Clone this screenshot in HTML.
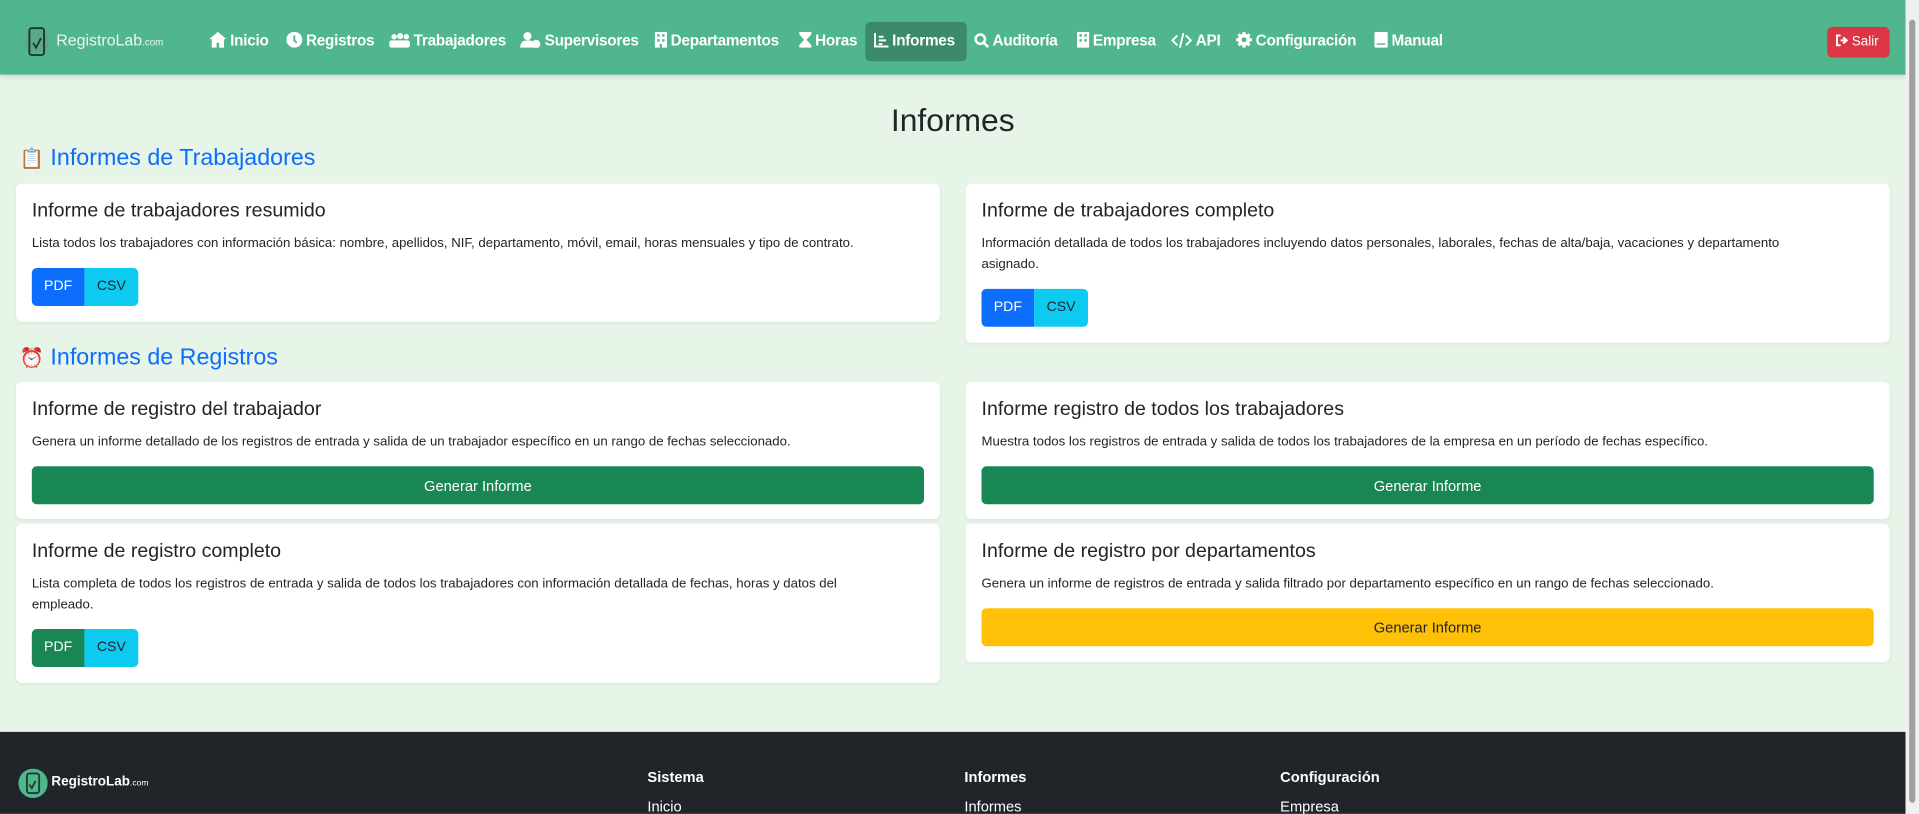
<!DOCTYPE html>
<html><head><meta charset="utf-8">
<style>
*{margin:0;padding:0;box-sizing:border-box}
html,body{width:1919px;height:814px;overflow:hidden;background:#e7f5e9}
#w{width:1568px;height:665px;transform:scale(1.22385);transform-origin:0 0;position:relative;font-family:"Liberation Sans",sans-serif;color:#212529}
.nav{position:absolute;left:0;top:0;width:1557px;height:61px;background:#4fb68e;box-shadow:0 2px 4px rgba(0,0,0,.12)}
.ni{position:absolute;top:26px;color:#fff;font-weight:bold;font-size:12.5px;white-space:nowrap;letter-spacing:-.2px}
.ni svg{vertical-align:-2px;margin-right:3px}
.act{position:absolute;left:707px;top:18px;width:83px;height:32px;background:#3b8a6a;border-radius:4px}
.salir{position:absolute;left:1493px;top:22px;width:51px;height:25px;background:#dc3545;border-radius:4px;color:#fff;font-size:11px;padding:6px 0 0 7px}
h1{position:absolute;left:0;width:1557px;top:83px;text-align:center;font-size:26px;font-weight:500}
.sec{position:absolute;left:16px;color:#0d6efd;font-size:19px}
.card{position:absolute;background:#fff;border-radius:5px;box-shadow:0 1px 3px rgba(0,0,0,.06)}
.card h3{position:absolute;left:13px;top:14px;font-size:16px;font-weight:500;white-space:nowrap}
.card p{position:absolute;left:13px;top:41px;right:13px;font-size:10.8px;line-height:17px}
.bg{position:absolute;left:13px;height:31px;display:flex;font-size:11.5px}
.bg span{display:block;padding:9px 0 0;text-align:center}
.gen{position:absolute;left:13px;right:13px;height:31px;border-radius:4px;color:#fff;font-size:12px;text-align:center;padding-top:9px;background:#198754}
.foot{position:absolute;left:0;top:598px;width:1557px;height:67px;background:#212529;color:#fff}
.fh{position:absolute;top:30px;font-weight:bold;font-size:12px}
.fl{position:absolute;top:54px;font-size:12px}
.sb{position:absolute;left:1557px;top:0;width:11px;height:665px;background:#f0f0f0}
.sb div{position:absolute;left:3px;top:16px;width:5px;height:640px;background:#a0a0a0;border-radius:3px}
</style></head><body><div id="w">
<div class="nav">
 <svg style="position:absolute;left:20px;top:21px" width="20" height="26" viewBox="0 0 20 26"><circle cx="10" cy="13" r="10" fill="#5aa98a"/><rect x="4" y="2" width="12" height="22" rx="2" fill="none" stroke="#1f3b30" stroke-width="1.6"/><path d="M7 14l2.5 4 4-8" stroke="#1f3b30" stroke-width="1.5" fill="none"/></svg>
 <div style="position:absolute;left:46px;top:25px;color:#f0f5f2;font-size:13px">RegistroLab<span style="font-size:8px">.com</span></div>
 <div class="act"></div>
 <div class="ni" style="left:171px"><svg width="14" height="13" viewBox="0 0 14 13"><path d="M7 0L0 6h2v7h4V9h2v4h4V6h2z" fill="#fff"/></svg>Inicio</div>
 <div class="ni" style="left:234px"><svg width="13" height="13"><circle cx="6.5" cy="6.5" r="6.5" fill="#fff"/><path d="M6.5 3v4l2 2" stroke="#4fb68e" stroke-width="1.5" fill="none"/></svg>Registros</div>
 <div class="ni" style="left:318px"><svg width="17" height="12"><circle cx="4" cy="3" r="2.2" fill="#fff"/><circle cx="9" cy="2.5" r="2.5" fill="#fff"/><circle cx="14" cy="3" r="2.2" fill="#fff"/><rect x="0" y="6" width="17" height="6" rx="2" fill="#fff"/></svg>Trabajadores</div>
 <div class="ni" style="left:425px"><svg width="17" height="13"><circle cx="6" cy="3.5" r="3.3" fill="#fff"/><path d="M0 13c0-4 2-6 6-6s5 1 6 3v3z" fill="#fff"/><circle cx="13" cy="10" r="3.5" fill="#fff"/></svg>Supervisores</div>
 <div class="ni" style="left:535px"><svg width="10" height="13"><rect width="10" height="13" fill="#fff"/><rect x="2" y="2" width="2" height="2" fill="#4fb68e"/><rect x="6" y="2" width="2" height="2" fill="#4fb68e"/><rect x="2" y="6" width="2" height="2" fill="#4fb68e"/><rect x="6" y="6" width="2" height="2" fill="#4fb68e"/><rect x="4" y="10" width="2" height="3" fill="#4fb68e"/></svg>Departamentos</div>
 <div class="ni" style="left:653px"><svg width="10" height="13"><path d="M0 0h10v2L6 6.5 10 11v2H0v-2l4-4.5L0 2z" fill="#fff"/></svg>Horas</div>
 <div class="ni" style="left:714px"><svg width="12" height="12"><path d="M1 0v11h11" stroke="#fff" stroke-width="1.6" fill="none"/><path d="M4 3h4M4 6h6M4 9h3" stroke="#fff" stroke-width="1.6"/></svg>Informes</div>
 <div class="ni" style="left:796px"><svg width="12" height="12"><circle cx="5" cy="5" r="3.8" stroke="#fff" stroke-width="2" fill="none"/><path d="M8 8l3.5 3.5" stroke="#fff" stroke-width="2"/></svg>Auditoría</div>
 <div class="ni" style="left:880px"><svg width="10" height="13"><rect width="10" height="13" fill="#fff"/><rect x="2" y="2" width="2" height="2" fill="#4fb68e"/><rect x="6" y="2" width="2" height="2" fill="#4fb68e"/><rect x="2" y="6" width="2" height="2" fill="#4fb68e"/><rect x="6" y="6" width="2" height="2" fill="#4fb68e"/></svg>Empresa</div>
 <div class="ni" style="left:957px"><svg width="17" height="12"><path d="M5 2L1 6l4 4M12 2l4 4-4 4M10 0L7 12" stroke="#fff" stroke-width="1.6" fill="none"/></svg>API</div>
 <div class="ni" style="left:1010px"><svg width="13" height="13"><circle cx="6.5" cy="6.5" r="5" fill="#fff"/><path d="M6.5 0v13M0 6.5h13M2 2l9 9M11 2l-9 9" stroke="#fff" stroke-width="2.5"/><circle cx="6.5" cy="6.5" r="2" fill="#4fb68e"/></svg>Configuración</div>
 <div class="ni" style="left:1123px"><svg width="11" height="13"><rect width="11" height="13" rx="1.5" fill="#fff"/><path d="M2 10h7" stroke="#4fb68e" stroke-width="1.2"/></svg>Manual</div>
 <div class="salir"><svg width="10" height="10" style="vertical-align:-1px"><path d="M4 1H1v8h3" stroke="#fff" stroke-width="1.6" fill="none"/><path d="M4 5h4M6 2.5L9 5 6 7.5" stroke="#fff" stroke-width="1.6" fill="none"/></svg> Salir</div>
</div>
<h1>Informes</h1>
<div class="sec" style="top:119px"><span style="font-size:16px">📋</span> Informes de Trabajadores</div>
<div class="card" style="left:13px;top:150px;width:755px;height:113px"><h3>Informe de trabajadores resumido</h3><p>Lista todos los trabajadores con información básica: nombre, apellidos, NIF, departamento, móvil, email, horas mensuales y tipo de contrato.</p>
 <div class="bg" style="top:69px"><span style="width:43px;background:#0d6efd;color:#fff;border-radius:4px 0 0 4px">PDF</span><span style="width:44px;background:#0dcaf0;border-radius:0 4px 4px 0">CSV</span></div></div>
<div class="card" style="left:789px;top:150px;width:755px;height:130px"><h3>Informe de trabajadores completo</h3><p>Información detallada de todos los trabajadores incluyendo datos personales, laborales, fechas de alta/baja, vacaciones y departamento<br>asignado.</p>
 <div class="bg" style="top:86px"><span style="width:43px;background:#0d6efd;color:#fff;border-radius:4px 0 0 4px">PDF</span><span style="width:44px;background:#0dcaf0;border-radius:0 4px 4px 0">CSV</span></div></div>
<div class="sec" style="top:282px"><span style="font-size:16px">⏰</span> Informes de Registros</div>
<div class="card" style="left:13px;top:312px;width:755px;height:112px"><h3>Informe de registro del trabajador</h3><p>Genera un informe detallado de los registros de entrada y salida de un trabajador específico en un rango de fechas seleccionado.</p><div class="gen" style="top:69px">Generar Informe</div></div>
<div class="card" style="left:789px;top:312px;width:755px;height:112px"><h3>Informe registro de todos los trabajadores</h3><p>Muestra todos los registros de entrada y salida de todos los trabajadores de la empresa en un período de fechas específico.</p><div class="gen" style="top:69px">Generar Informe</div></div>
<div class="card" style="left:13px;top:428px;width:755px;height:130px"><h3>Informe de registro completo</h3><p>Lista completa de todos los registros de entrada y salida de todos los trabajadores con información detallada de fechas, horas y datos del<br>empleado.</p>
 <div class="bg" style="top:86px"><span style="width:43px;background:#198754;color:#fff;border-radius:4px 0 0 4px">PDF</span><span style="width:44px;background:#0dcaf0;border-radius:0 4px 4px 0">CSV</span></div></div>
<div class="card" style="left:789px;top:428px;width:755px;height:113px"><h3>Informe de registro por departamentos</h3><p>Genera un informe de registros de entrada y salida filtrado por departamento específico en un rango de fechas seleccionado.</p><div class="gen" style="top:69px;background:#ffc107;color:#212529">Generar Informe</div></div>
<div class="foot">
 <svg style="position:absolute;left:15px;top:30px" width="24" height="24"><circle cx="12" cy="12" r="12" fill="#4fb68e"/><rect x="7" y="4" width="10" height="16" rx="2" fill="none" stroke="#1f3b30" stroke-width="1.5"/><path d="M9 13l2 3 3-6" stroke="#1f3b30" stroke-width="1.4" fill="none"/></svg>
 <div style="position:absolute;left:42px;top:35px;font-size:11px;font-weight:bold">RegistroLab<span style="font-size:7px;font-weight:normal">.com</span></div>
 <div class="fh" style="left:529px">Sistema</div><div class="fl" style="left:529px">Inicio</div>
 <div class="fh" style="left:788px">Informes</div><div class="fl" style="left:788px">Informes</div>
 <div class="fh" style="left:1046px">Configuración</div><div class="fl" style="left:1046px">Empresa</div>
</div>
<div class="sb"><div></div></div>
</div></body></html>
